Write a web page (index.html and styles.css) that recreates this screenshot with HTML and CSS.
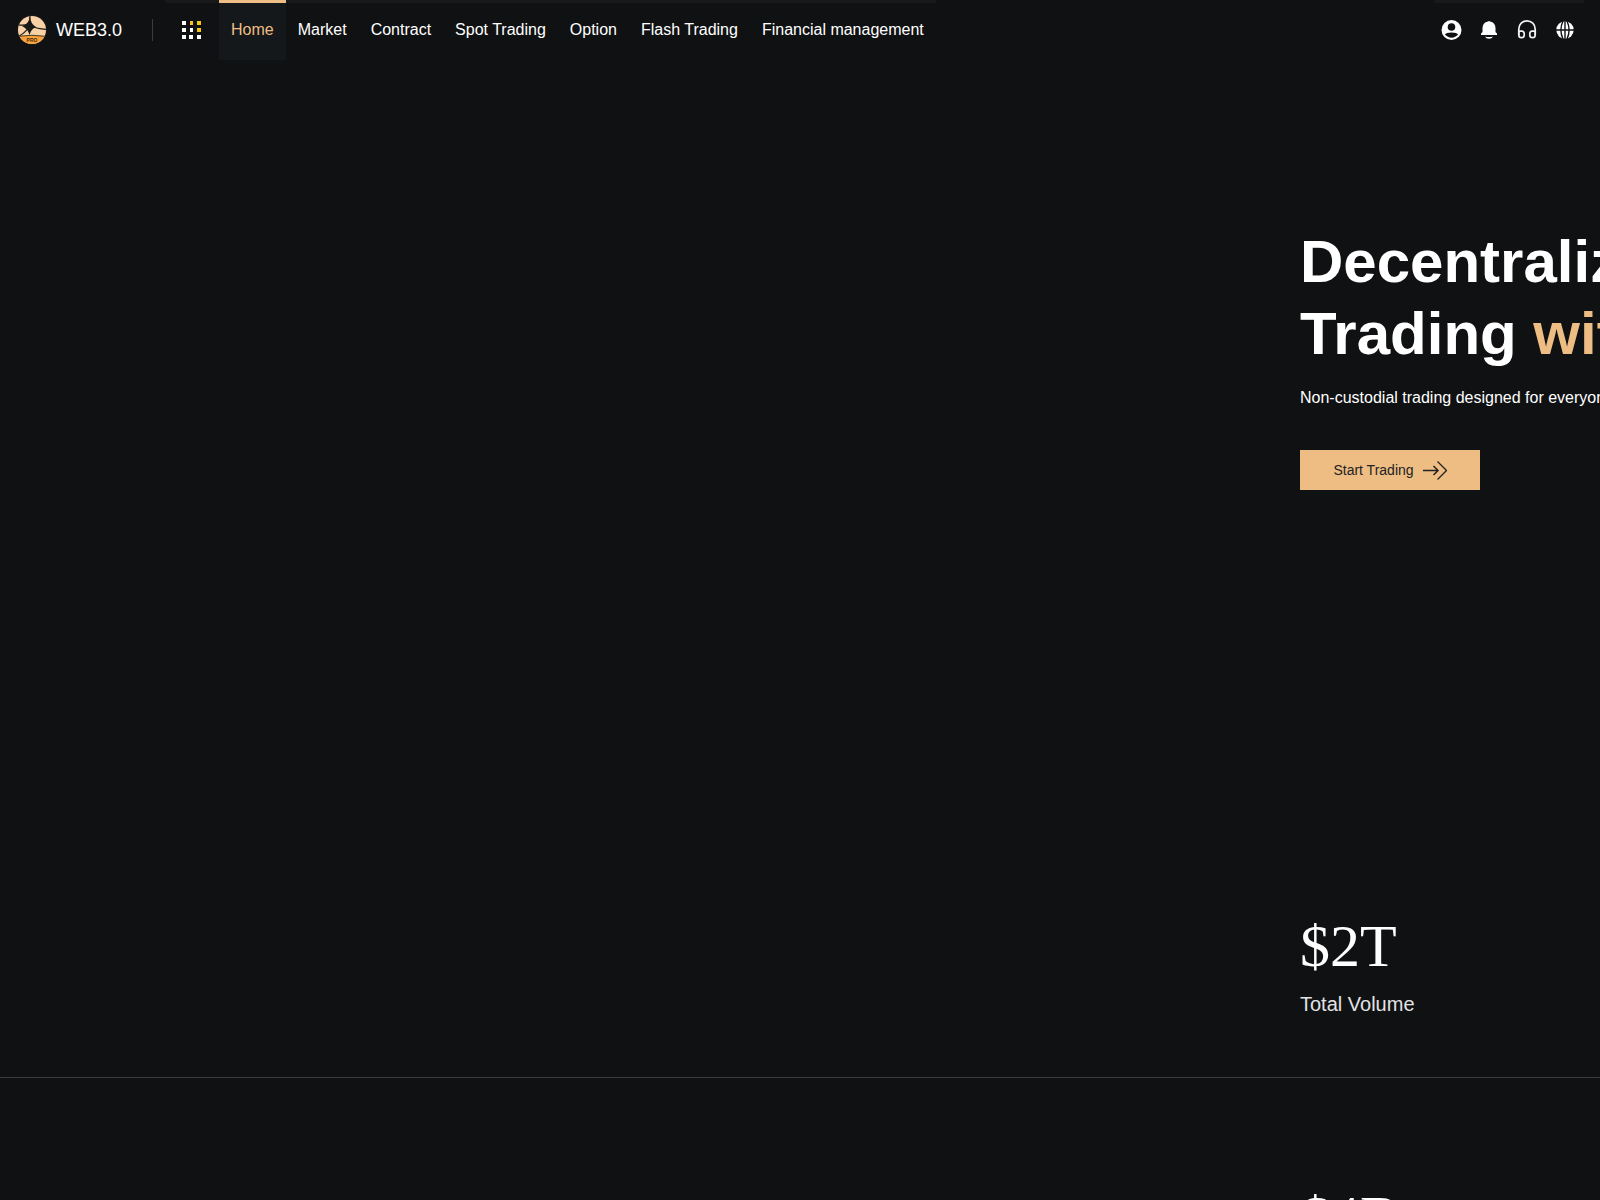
FILE: index.html
```
<!DOCTYPE html>
<html lang="en">
<head>
    <meta charset="UTF-8">
    <meta name="viewport" content="width=device-width, initial-scale=1.0">
    <title>WEB3.0</title>
    <link rel="stylesheet" href="styles.css">
</head>
<body>
    <header class="header">
        <a class="logo" href="#">
            <svg class="logo-icon" viewBox="0 0 32 32" aria-hidden="true">
                <clipPath id="coin"><circle cx="16" cy="16" r="14"/></clipPath>
                <circle cx="16" cy="16" r="15" fill="#1b1a19"/>
                <g clip-path="url(#coin)">
                    <rect width="32" height="32" fill="#f8d2a6"/>
                    <path d="M14 0Q14 7 13 10Q8 12 0 10.500M16 12Q21 15 32 15.500M12 14Q9 19 3 22" fill="none" stroke="#1b1a19" stroke-width="1.200"/>
                    <path d="M14 2Q14.500 10 20 13Q15 15 13.500 21Q12 15 6 12Q13 10 14 2Z" fill="#1b1a19"/>
                    <path d="M0 22.500Q16 20 32 22.500V32H0Z" fill="#f9a13a"/>
                    <path d="M0 22.500Q16 20 32 22.500" fill="none" stroke="#1b1a19" stroke-width=".8"/>
                    <text x="16" y="28" class="logo-pro">PRO</text>
                </g>
            </svg>
            <span>WEB3.0</span>
        </a>

        <nav class="nav">
            <a class="nav-item" href="#" aria-label="Apps">
                <svg viewBox="0 0 30 30" width="30" height="30">
                    <path fill="#fff" d="M5 6h4v4h-4zM5 13h4v4h-4zM5 20h4v4h-4zM13 13h3v4h-3zM12 20h4v4h-4zM20 20h4v4h-4z"/>
                    <path fill="#f5c518" d="M13 6h3v4h-3zM20 6h4v4h-4zM20 13h4v4h-4z"/>
                </svg>
            </a>
            <a class="nav-item active" href="#">Home</a>
            <a class="nav-item" href="#">Market</a>
            <a class="nav-item" href="#">Contract</a>
            <a class="nav-item" href="#">Spot Trading</a>
            <a class="nav-item" href="#">Option</a>
            <a class="nav-item" href="#">Flash Trading</a>
            <a class="nav-item" href="#">Financial management</a>
        </nav>

        <div class="tools">
            <button type="button" aria-label="Account">
                <svg viewBox="0 0 24 24">
                    <circle cx="12.500" cy="12" r="10" fill="#fff"/>
                    <circle cx="12.500" cy="9" r="3.800" fill="#101113"/>
                    <path d="M5.900 16.600Q7 14.400 12.500 14.400T19.100 16.600Q16.500 19.700 12.500 19.700T5.900 16.600Z" fill="#101113"/>
                </svg>
            </button>
            <button type="button" aria-label="Notifications">
                <svg viewBox="0 0 24 24">
                    <path d="M11 3.400Q12 2.800 13 3.400Q18.500 4.600 18.500 10V14L20 15.600V17H4V15.600L5.500 14V10Q5.500 4.600 11 3.400Z" fill="#fff"/>
                    <path d="M8 18.400Q12 19.700 16 18.400Q15 20.800 12 20.800T8 18.400Z" fill="#fff"/>
                </svg>
            </button>
            <button type="button" aria-label="Support">
                <svg viewBox="0 0 24 24" fill="none" stroke="#f2f2f2" stroke-width="1.700">
                    <path d="M3.800 17V11a8.200 8.200 0 0 1 16.400 0V17"/>
                    <path d="M3.800 13.200H7a2.200 2.200 0 0 1 2.200 2.200V17a2.700 2.700 0 0 1-5.400 0Z"/>
                    <path d="M20.200 13.200H17a2.200 2.200 0 0 0-2.200 2.200V17a2.700 2.700 0 0 0 5.400 0Z"/>
                </svg>
            </button>
            <button type="button" aria-label="Language">
                <svg viewBox="0 0 24 24">
                    <circle cx="12" cy="12" r="8.700" fill="#fff"/>
                    <path d="M3 12H21M12 3V21M10 3Q5.800 12 10 21M14 3Q18.200 12 14 21" fill="none" stroke="#101113" stroke-width="1.400"/>
                </svg>
            </button>
        </div>
    </header>

    <main>
        <section class="hero">
            <div class="content">
                <h1>Decentralized<br>Trading <span>without limits</span></h1>
                <p>Non-custodial trading designed for everyone</p>
                <button type="button" class="start-btn">
                    Start Trading
                    <svg viewBox="0 0 24 20" width="24" height="20" fill="none" stroke="#222">
                        <path d="M0 10.500H15M10.500 6L15 10.500L10.500 15" stroke-width="1.500"/>
                        <path d="M14.500 1.500L23.500 10.500L14.500 19.500" stroke-width="1.300"/>
                    </svg>
                </button>
            </div>
        </section>

        <section class="stat">
            <div class="content">
                <div class="stat-value">$2T</div>
                <div class="stat-label">Total Volume</div>
            </div>
        </section>
        <section class="stat">
            <div class="content">
                <div class="stat-value">$4B</div>
            </div>
        </section>
    </main>
</body>
</html>
```
FILE: styles.css
```
:root {
    --bg-color: #101113;
    --primary-color: #eebd84;
    --bar-color: #17191b;
}
* {
    box-sizing: border-box;
}
html {
    height: 100%;
    overflow: hidden;
}
body {
    margin: 0;
    height: 100%;
    overflow: hidden;
    background: var(--bg-color);
    color: #fff;
    font-family: "Liberation Sans", Arial, sans-serif;
    font-size: 16px;
}
a {
    color: inherit;
    text-decoration: none;
}
button {
    border: none;
    background: none;
    padding: 0;
    font-family: inherit;
    cursor: pointer;
}
svg {
    display: block;
}

/* header */
.header {
    display: flex;
    height: 60px;
    padding: 0 16px;
}
.logo {
    display: flex;
    align-items: center;
    gap: 8px;
    align-self: center;
    height: 22px;
    padding-right: 30px;
    margin-right: 12px;
    border-right: 1px solid #3a3b3d;
    font-size: 18px;
}
.logo-icon {
    width: 32px;
    height: 32px;
}
.logo-pro {
    font-size: 5px;
    font-weight: bold;
    text-anchor: middle;
    fill: #4a2c0c;
}
.nav {
    display: flex;
}
.nav-item {
    display: flex;
    align-items: center;
    padding: 0 12px 3px;
    border-top: 3px solid var(--bar-color);
    white-space: nowrap;
}
.nav-item.active {
    color: var(--primary-color);
    background: #14181b;
    border-top-color: var(--primary-color);
}
.tools {
    display: flex;
    align-items: center;
    gap: 14px;
    margin-left: auto;
    padding: 0 7px 3px 5px;
    border-top: 3px solid var(--bar-color);
}
.tools svg {
    width: 24px;
    height: 24px;
}

/* sections: content sits in the right column */
.hero,
.stat {
    display: grid;
    grid-template-columns: 13fr 3fr;
}
.content {
    grid-column: 2;
    min-width: 0;
    white-space: nowrap;
}
.hero {
    padding: 166px 0 317px;
}
.hero h1 {
    margin: 0;
    font-size: 60px;
    line-height: 72px;
}
.hero h1 span {
    color: var(--primary-color);
}
.hero p {
    margin: 16px 0 40px;
    line-height: 24px;
}
.start-btn {
    display: flex;
    justify-content: center;
    align-items: center;
    gap: 9px;
    width: 180px;
    height: 40px;
    background: var(--primary-color);
    color: #222;
    font-size: 14px;
}
.stat {
    min-height: 271px;
    padding-top: 104px;
    border-bottom: 1px solid #3a3c3e;
}
.stat-value {
    font-family: "Liberation Serif", "Times New Roman", serif;
    font-size: 60px;
    line-height: 70px;
}
.stat-label {
    margin-top: 11px;
    font-size: 20px;
    line-height: 24px;
    color: #e2e3e4;
}
```
